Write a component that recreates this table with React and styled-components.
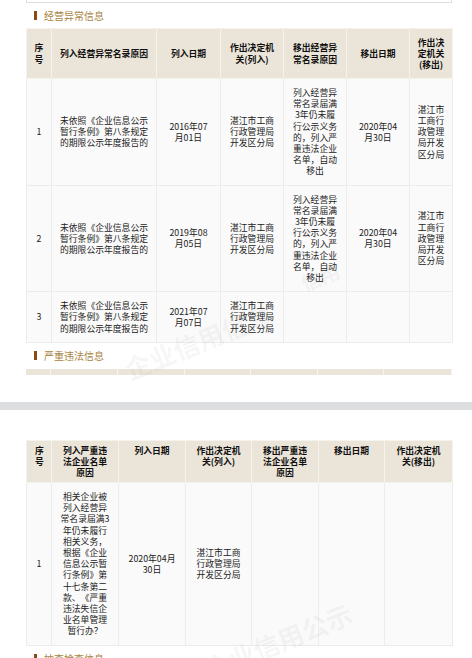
import styled, { createGlobalStyle } from "styled-components";

const GlobalStyle = createGlobalStyle`
	body {
		margin: 0;
		background: #fff;
		font-family: "Noto Sans CJK SC", "Noto Sans", sans-serif;
		color: #222;
		text-spacing-trim: space-all;
	}
`;

const Page = styled.div`
	position: relative;
	width: 472px;
	overflow: hidden;
`;

const Screen = styled.div`
	height: ${(p) => p.$height}px;
	padding-top: ${(p) => p.$top || 0}px;
	box-sizing: border-box;
`;

const Content = styled.div`
	width: 426px;
	margin-left: 26px;
`;

const BoxEnd = styled.div`
	height: 3px;
	border: 1px solid #dedede;
	border-top: none;
	box-sizing: border-box;
`;

const SectionTitle = styled.div`
	display: flex;
	align-items: center;
	gap: 7px;
	height: ${(p) => p.$height || 26}px;
	padding-left: 8px;
	font-size: 10px;
	color: #a8843f;
	&::before {
		content: "";
		width: 3px;
		height: 9px;
		background: #8b4a12;
	}
`;

const Table = styled.table`
	width: 426px;
	table-layout: fixed;
	border-collapse: collapse;
	border-bottom: 1px solid #cfcfcf;
`;

const HeadCell = styled.th`
	height: ${(p) => p.$height}px;
	padding: ${(p) => (p.$align ? 4 : 0)}px ${(p) => p.$padX}px 0;
	box-sizing: border-box;
	background: #ebe4d8;
	border: 1px solid #f6f2ec;
	font-size: 8.8px;
	line-height: 11.2px;
	font-weight: 700;
	color: #111;
	text-align: center;
	vertical-align: ${(p) => p.$align || "middle"};
`;

const BodyCell = styled.td`
	padding: 8px ${(p) => p.$padX}px;
	background: #fafafa;
	border: 1px solid #ececec;
	font-size: 8.8px;
	line-height: 11.2px;
	color: #222;
	text-align: center;
	vertical-align: middle;
	white-space: pre-line;
	word-break: break-all;
`;

const Strip = styled.div`
	display: grid;
	grid-template-columns: 25px 67px 67px 66px 67px 66px 68px;
	height: 6px;
	background: #ebe4d8;
`;

const StripCell = styled.div`
	border-right: 1px solid #f6f2ec;
`;

const Band = styled.div`
	height: 8px;
	background: #dddee0;
`;

const Watermark = styled.span`
	position: absolute;
	left: ${(p) => p.$x}px;
	top: ${(p) => p.$y}px;
	font-size: ${(p) => p.$size || 24}px;
	font-weight: 700;
	color: rgba(120, 120, 120, 0.07);
	transform: rotate(-22deg);
	white-space: nowrap;
	pointer-events: none;
`;

const abnormalHead = [
	"序号",
	"列入经营异常名录原因",
	"列入日期",
	"作出决定机关(列入)",
	"移出经营异常名录原因",
	"移出日期",
	"作出决定机关(移出)",
];

const reason = "未依照《企业信息公示暂行条例》第八条规定的期限公示年度报告的";
const office = "湛江市工商行政管理局开发区分局";
// the source page breaks this one before the "3"
const removeReason =
	"列入经营异常名录届满\n3年仍未履行公示义务的，列入严重违法企业名单，自动移出";

const abnormalRows = [
	["1", reason, "2016年07\n月01日", office, removeReason, "2020年04\n月30日", office],
	["2", reason, "2019年08\n月05日", office, removeReason, "2020年04\n月30日", office],
	["3", reason, "2021年07\n月07日", office, "", "", ""],
];

const illegalHead = [
	"序号",
	"列入严重违法企业名单原因",
	"列入日期",
	"作出决定机关(列入)",
	"移出严重违法企业名单原因",
	"移出日期",
	"作出决定机关(移出)",
];

const illegalRows = [
	[
		"1",
		"相关企业被列入经营异常名录届满3年仍未履行相关义务，根据《企业信息公示暂行条例》第十七条第二款、《严重违法失信企业名单管理暂行办？",
		"2020年04月\n30日",
		office,
		"",
		"",
		"",
	],
];

function DataTable({ cols, head, rows, headHeight, headAlign, padX }) {
	return (
		<Table>
			<colgroup>
				{cols.map((w, i) => (
					<col key={i} style={{ width: w }} />
				))}
			</colgroup>
			<thead>
				<tr>
					{head.map((h) => (
						<HeadCell key={h} $height={headHeight} $align={headAlign} $padX={padX}>
							{h}
						</HeadCell>
					))}
				</tr>
			</thead>
			<tbody>
				{rows.map((r, i) => (
					<tr key={i}>
						{r.map((c, j) => (
							<BodyCell key={j} $padX={padX}>
								{c}
							</BodyCell>
						))}
					</tr>
				))}
			</tbody>
		</Table>
	);
}

export default function App() {
	return (
		<>
			<GlobalStyle />
			<Page>
				<Screen $height={402}>
					<Content>
						<BoxEnd />
						<SectionTitle $height={25}>经营异常信息</SectionTitle>
						<DataTable
							cols={[25, 105, 64, 63, 63, 63, 43]}
							head={abnormalHead}
							rows={abnormalRows}
							headHeight={50}
							padX={7.5}
						/>
						<SectionTitle>严重违法信息</SectionTitle>
						<Strip>
							{illegalHead.map((h) => (
								<StripCell key={h} />
							))}
						</Strip>
					</Content>
				</Screen>
				<Band />
				<Screen $height={300} $top={30}>
					<Content>
						<DataTable
							cols={[25, 67, 67, 66, 67, 66, 68]}
							head={illegalHead}
							rows={illegalRows}
							headHeight={42}
							headAlign="top"
							padX={8}
						/>
						<SectionTitle>抽查检查信息</SectionTitle>
					</Content>
				</Screen>
				<Watermark $x={120} $y={322} $size={26}>
					企业信用信息
				</Watermark>
				<Watermark $x={300} $y={262} $size={20}>
					信用
				</Watermark>
				<Watermark $x={200} $y={622} $size={26}>
					企业信用公示
				</Watermark>
			</Page>
		</>
	);
}
